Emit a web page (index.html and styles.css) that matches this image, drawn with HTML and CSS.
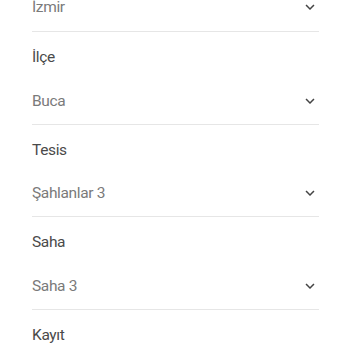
FILE: index.html
```
<!DOCTYPE html>
<html lang="tr">
<head>
<meta charset="utf-8">
<link rel="stylesheet" href="styles.css">
</head>
<body>
<div class="form">
  <div class="select first">
    <span class="value">İzmir</span>
    <svg class="chev" viewBox="0 0 24 24" width="18" height="18"><path d="M16.59 8.59L12 13.17 7.41 8.59 6 10l6 6 6-6z"/></svg>
  </div>
  <div class="label">İlçe</div>
  <div class="select">
    <span class="value">Buca</span>
    <svg class="chev" viewBox="0 0 24 24" width="18" height="18"><path d="M16.59 8.59L12 13.17 7.41 8.59 6 10l6 6 6-6z"/></svg>
  </div>
  <div class="label">Tesis</div>
  <div class="select">
    <span class="value">Şahlanlar 3</span>
    <svg class="chev" viewBox="0 0 24 24" width="18" height="18"><path d="M16.59 8.59L12 13.17 7.41 8.59 6 10l6 6 6-6z"/></svg>
  </div>
  <div class="label">Saha</div>
  <div class="select">
    <span class="value">Saha 3</span>
    <svg class="chev" viewBox="0 0 24 24" width="18" height="18"><path d="M16.59 8.59L12 13.17 7.41 8.59 6 10l6 6 6-6z"/></svg>
  </div>
  <div class="label">Kayıt</div>
  <div class="field"></div>
</div>
</body>
</html>
```
FILE: styles.css
```
html, body {
  margin: 0;
  padding: 0;
  background: #ffffff;
  overflow: hidden;
}
.form {
  padding: 0 31px 0 32px;
  font-family: Roboto, "Noto Sans", sans-serif;
  font-size: 15.5px;
  letter-spacing: -0.35px;
  line-height: 20px;
}
.label {
  color: #4a4a4a;
  padding-top: 15px;
  height: 20px;
  padding-bottom: 23.5px;
}
.select {
  display: flex;
  align-items: center;
  justify-content: space-between;
  height: 20px;
  padding-bottom: 13px;
  border-bottom: 1px solid #e6e6e6;
}
.select.first {
  margin-top: -3px;
  padding-bottom: 14px;
}
.value {
  color: #7a7a7a;
}
.chev {
  fill: #444444;
  flex: none;
}
.field {
  margin-top: 9.5px;
  border-top: 1px solid #eeeeee;
  height: 10px;
}
```
